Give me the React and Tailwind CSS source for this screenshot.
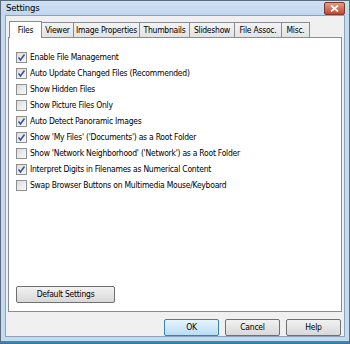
import { useState } from "react";

const tabs = [
  { name: "Files", w: "w-[33px]" },
  { name: "Viewer", w: "w-[33px]" },
  { name: "Image Properties", w: "w-[67px]" },
  { name: "Thumbnails", w: "w-[51px]" },
  { name: "Slideshow", w: "w-[46px]" },
  { name: "File Assoc.", w: "w-[48px]" },
  { name: "Misc.", w: "w-[29px]" },
];

const options = [
  { label: "Enable File Management", checked: true },
  { label: "Auto Update Changed Files (Recommended)", checked: true },
  { label: "Show Hidden Files", checked: false },
  { label: "Show Picture Files Only", checked: false },
  { label: "Auto Detect Panoramic Images", checked: true },
  { label: "Show 'My Files' ('Documents') as a Root Folder", checked: true },
  { label: "Show 'Network Neighborhood' ('Network') as a Root Folder", checked: false },
  { label: "Interpret Digits in Filenames as Numerical Content", checked: true },
  { label: "Swap Browser Buttons on Multimedia Mouse/Keyboard", checked: false },
];

function CheckBox({ checked, onToggle, label }) {
  return (
    <label
      className="flex items-center h-[16px] gap-[3px] cursor-default"
      onClick={onToggle}
    >
      <span className="w-[11px] h-[11px] border border-[#8e8f8f] bg-gradient-to-br from-[#dcdcdc] to-[#fafafa] flex items-center justify-center">
        {checked && (
          <svg width="9" height="9" viewBox="0 0 9 9">
            <path
              d="M1.5 4.5 L3.5 7 L7.5 1.5"
              fill="none"
              stroke="#3a53a0"
              strokeWidth="1.6"
            />
          </svg>
        )}
      </span>
      <span>{label}</span>
    </label>
  );
}

function WinButton({ children, className = "", primary = false }) {
  return (
    <button
      className={
        "h-[17px] border rounded-[2px] leading-none flex items-center justify-center " +
        (primary
          ? "border-[#3c7fb1] bg-gradient-to-b from-[#e5f4fc] to-[#b9def5] "
          : "border-[#707070] bg-gradient-to-b from-[#f2f2f2] to-[#d8d8d8] ") +
        className
      }
    >
      {children}
    </button>
  );
}

export default function App() {
  const [values, setValues] = useState(options.map((o) => o.checked));

  const toggle = (i) =>
    setValues((v) => v.map((c, j) => (j === i ? !c : c)));

  return (
    <div
      className="w-[350px] h-[344px] bg-[#c5d9ef] border border-[#5b6a7c] flex flex-col text-black"
      style={{ fontFamily: '"DejaVu Sans Condensed", "Liberation Sans", sans-serif' }}
    >
      {/* title bar */}
      <div className="h-[16px] flex items-center justify-between pl-[5px] pr-[4px] bg-gradient-to-b from-[#cfe0f3] to-[#c1d6ee]">
        <span className="text-[9.5px] leading-none tracking-[-0.2px]">Settings</span>
        <span className="w-[21px] h-[13px] rounded-[2px] border border-[#7a3b2f] bg-gradient-to-b from-[#e49a85] to-[#c4452c] flex items-center justify-center">
          <svg width="9" height="7" viewBox="0 0 9 7">
            <path d="M1 0.5 L8 6.5 M8 0.5 L1 6.5" stroke="#fff" strokeWidth="1.8" />
          </svg>
        </span>
      </div>

      {/* dialog body */}
      <div className="flex-1 mx-[4px] mb-[4px] border border-[#8ea3bb] bg-[#f0f0f0] flex flex-col px-[2px] pt-[4px] text-[8.5px] leading-none tracking-[-0.25px]">
        <div className="flex items-end h-[17px] pl-[1px]">
          {tabs.map((t, i) =>
            i === 0 ? (
              <div
                key={t.name}
                className={t.w + " h-[17px] bg-white border border-b-0 border-[#898c95] flex items-center justify-center relative -mb-px z-10"}
              >
                {t.name}
              </div>
            ) : (
              <div
                key={t.name}
                className={t.w + " h-[15px] -ml-px bg-gradient-to-b from-[#f3f3f3] to-[#e3e3e3] border border-b-0 border-[#898c95] flex items-center justify-center"}
              >
                {t.name}
              </div>
            )
          )}
        </div>

        <div className="h-[275px] bg-white border border-[#898c95] flex flex-col px-[7px] pt-[11px] pb-[8px]">
          {options.map((o, i) => (
            <CheckBox
              key={o.label}
              label={o.label}
              checked={values[i]}
              onToggle={() => toggle(i)}
            />
          ))}
          <div className="mt-auto">
            <WinButton className="w-[99px]">Default Settings</WinButton>
          </div>
        </div>

        <div className="flex justify-end gap-[6px] pt-[7px] pr-[1px]">
          <WinButton primary className="w-[55px]">OK</WinButton>
          <WinButton className="w-[55px]">Cancel</WinButton>
          <WinButton className="w-[55px]">Help</WinButton>
        </div>
      </div>
      <div className="h-[2px] bg-[#2f8fb0]" />
    </div>
  );
}
